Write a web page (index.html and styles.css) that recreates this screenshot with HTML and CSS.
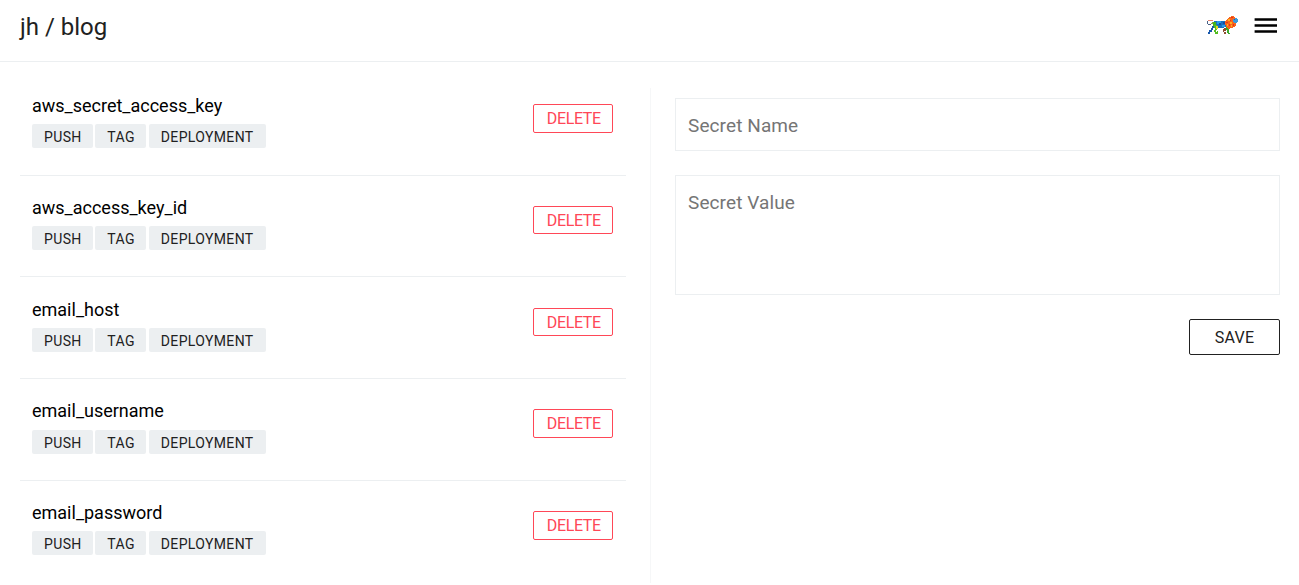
FILE: index.html
```html
<!DOCTYPE html>
<html lang="en">
<head>
<meta charset="utf-8">
<title>jh / blog</title>
<link rel="stylesheet" href="styles.css">
</head>
<body>
<header class="header">
  <h1 class="title">jh / blog</h1>
  <div class="actions">
    <svg class="avatar" viewBox="0 0 32 20" shape-rendering="crispEdges" aria-label="Lion">
      <path d="M1 5h5v1H1z" fill="#e58472"/>
      <path d="M0 6h1v3H0zM1 9h3v1H1z" fill="#4a6186"/>
      <path d="M4 8h2v1H4zM5 7h3v1H5z" fill="#8aa04c"/>
      <path d="M7 6h13v6h-3v1H10v-1H8v-2H6V7h1z" fill="#176fc3"/>
      <path d="M6 7h3v4H6z" fill="#46b51c"/>
      <path d="M10 6h4v3h-4zM15 10h3v2h-3z" fill="#2a9be8"/>
      <path d="M12 8h2v2h-2zM16 7h2v2h-2z" fill="#174b9f"/>
      <path d="M5 11h2v2H5zM4 13h2v2H4zM2 15h3v2H2zM1 17h2v2H1z" fill="#1757ac"/>
      <path d="M7 10h3v3H7zM8 13h2v2H8zM7 15h2v2H7zM8 17h3v2H8zM10 16h1v1h-1z" fill="#54bd20"/>
      <path d="M9 11h2v3H9z" fill="#e5d528"/>
      <path d="M17 13h2v3h-2zM16 14h1v3h-1zM17 17h2v2h-2z" fill="#8d4c31"/>
      <path d="M19 12h3v3h-3zM20 15h2v3h-2zM21 18h2v1h-2z" fill="#3aab2c"/>
      <path d="M24 1h3v1h1v6h1v3h-1v1h-2v1h-3v1h-2v-1h-1v-1h-1v-2h-1V6h1V5h1V4h1V3h1V2h2z" fill="#f8651b"/>
      <path d="M21 4h2v2h-2zM23 7h2v2h-2zM20 9h1v2h-1zM24 10h1v2h-1z" fill="#ffb120"/>
      <path d="M24 2h2v1h-2zM19 7h2v1h-2zM22 9h1v2h-1zM26 9h1v2h-1zM23 5h1v1h-1z" fill="#e7301a"/>
      <path d="M26 4h2V3h2v1h1v3h-1v1h-3V7h-1z" fill="#3a9bdc"/>
      <path d="M27 4h1v1h-1z" fill="#3459a4"/>
    </svg>
    <svg class="menu" viewBox="0 0 24 18" aria-label="Menu"><path d="M.6.3h22.4v2.4H.6zM.6 6.3h22.4v2.4H.6zM.6 12.3h22.4v2.4H.6z"/></svg>
  </div>
</header>
<main class="main">
  <section class="secrets">
    <article class="secret"><div><div class="name">aws_secret_access_key</div><div class="tags"><span class="tag">PUSH</span><span class="tag">TAG</span><span class="tag">DEPLOYMENT</span></div></div><button class="delete">DELETE</button></article>
    <article class="secret"><div><div class="name">aws_access_key_id</div><div class="tags"><span class="tag">PUSH</span><span class="tag">TAG</span><span class="tag">DEPLOYMENT</span></div></div><button class="delete">DELETE</button></article>
    <article class="secret"><div><div class="name">email_host</div><div class="tags"><span class="tag">PUSH</span><span class="tag">TAG</span><span class="tag">DEPLOYMENT</span></div></div><button class="delete">DELETE</button></article>
    <article class="secret"><div><div class="name">email_username</div><div class="tags"><span class="tag">PUSH</span><span class="tag">TAG</span><span class="tag">DEPLOYMENT</span></div></div><button class="delete">DELETE</button></article>
    <article class="secret"><div><div class="name">email_password</div><div class="tags"><span class="tag">PUSH</span><span class="tag">TAG</span><span class="tag">DEPLOYMENT</span></div></div><button class="delete">DELETE</button></article>
  </section>
  <form class="form">
    <input class="field" type="text" placeholder="Secret Name">
    <textarea class="field value" placeholder="Secret Value"></textarea>
    <button class="save" type="button">SAVE</button>
  </form>
</main>
</body>
</html>
```

FILE: styles.css
```css
* { box-sizing: border-box; }
body { margin: 0; height: 585px; overflow: hidden; background: #fff; color: #212121; font-family: Roboto, sans-serif; }
button, input, textarea { font-family: inherit; }
.header { height: 62px; border-bottom: 1px solid #eceff1; display: flex; justify-content: space-between; padding: 0 21px 0 20px; }
.title { margin: 11px 0 0; font-size: 24px; line-height: 32px; font-weight: 400; }
.actions { display: flex; align-items: flex-start; gap: 15px; }
.avatar { width: 32px; height: 20px; margin-top: 15px; }
.menu { width: 24px; height: 18px; margin-top: 18px; fill: #000; }
.main { display: flex; height: 497px; margin: 26px 19px 0 20px; }
.secrets { width: 631px; height: 495px; padding-right: 24.5px; border-right: 1px solid #f6f7f8; }
.secret { display: flex; justify-content: space-between; align-items: flex-start; height: 101.75px; padding: 6px 12.2px 0 12px; border-bottom: 1px solid #eceff1; }
.secret:first-child { height: 87.7px; }
.secret:not(:first-child) { padding-top: 20.15px; }
.secret:last-child { border-bottom: 0; }
.name { color: #000; font-size: 18px; line-height: 24px; }
.tags { display: flex; gap: 2.3px; margin-top: 6.3px; }
.tag { height: 24px; padding: 0 12px; border-radius: 2px; background: #eceff1; font-size: 14px; line-height: 26px; letter-spacing: .36px; }
.tag:first-child { width: 61px; }
.tag:nth-child(2) { width: 51.2px; }
.tag:last-child { width: 117px; }
.delete { width: 80px; height: 28.5px; margin: 10px 0 0; padding: 1px 0 0 1px; border: 1px solid #ff4757; border-radius: 2px; background: #fff; color: #ff4757; font-size: 16px; line-height: 26px; letter-spacing: -.35px; }
.form { flex: 1; display: flex; flex-direction: column; padding: 10px 0 0 24px; }
.field { display: block; width: 100%; height: 53px; margin: 0; padding: 4px 12px 2px; border: 1px solid #eceff1; border-radius: 0; background: #fff; font-size: 19px; letter-spacing: .1px; outline: 0; }
.field::placeholder { color: #757575; opacity: 1; }
.value { height: 120px; margin-top: 24px; padding: 15px 12px; line-height: 23px; resize: none; }
.save { align-self: flex-end; width: 91px; height: 36px; margin: 23.6px 0 0; padding: 1px 0 0; border: 1px solid #212121; border-radius: 2px; background: #fff; color: #212121; font-size: 16px; letter-spacing: .3px; }
```
